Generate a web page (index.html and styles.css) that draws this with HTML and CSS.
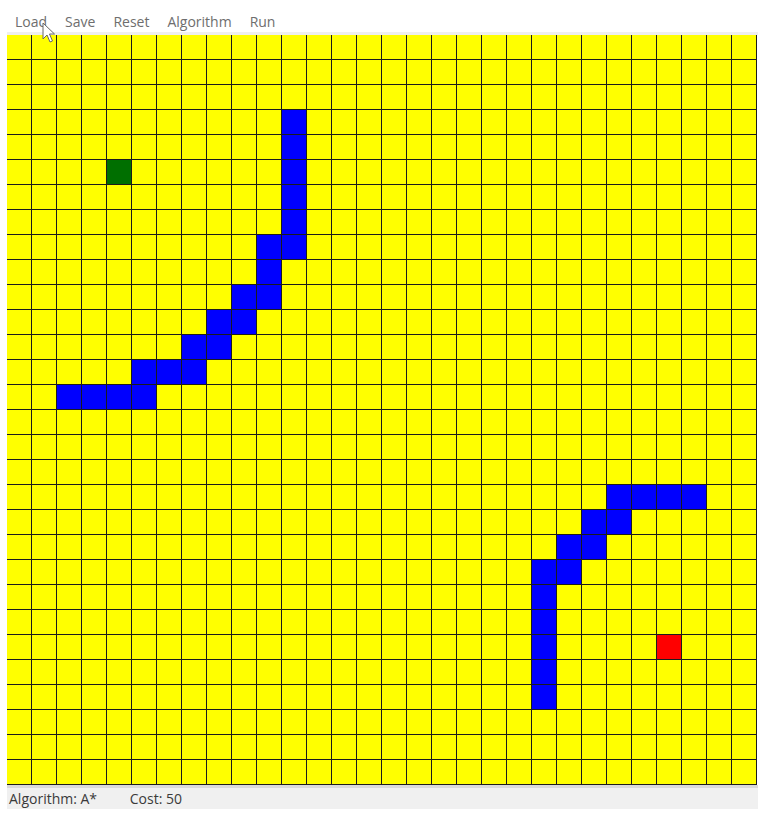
FILE: index.html
```html
<!DOCTYPE html>
<html>
	<head>
		<meta charset="utf-8" />
		<title>Path Finder</title>
		<link rel="stylesheet" href="styles.css">
		<script type="text/javascript">
			window.onload = function(){
				var board = document.getElementById("board");
				var size = 30;

				//障碍物 (行,列)
				var walls = [
					"3,11","4,11","5,11","6,11","7,11","8,11",
					"8,10","9,10","10,10",
					"10,9","11,9",
					"11,8","12,8",
					"12,7","13,7",
					"13,6",
					"13,5","14,5",
					"14,2","14,3","14,4",
					"18,24","18,25","18,26","18,27",
					"19,23","19,24",
					"20,22","20,23",
					"21,21","21,22",
					"22,21","23,21","24,21","25,21","26,21"
				];
				var start = "5,4";
				var goal = "24,26";

				for (var r = 0; r < size; r++) {
					for (var c = 0; c < size; c++) {
						var cell = document.createElement("div");
						var key = r + "," + c;
						if (walls.indexOf(key) != -1) {
							cell.className = "wall";
						} else if (key == start) {
							cell.className = "start";
						} else if (key == goal) {
							cell.className = "goal";
						}
						board.appendChild(cell);
					}
				}
			};
		</script>
	</head>
	<body>
		<div id="window">
			<div id="menu">
				<span>Load</span>
				<span>Save</span>
				<span>Reset</span>
				<span>Algorithm</span>
				<span>Run</span>
			</div>
			<div id="board"></div>
			<div id="status">
				<span>Algorithm: A*</span>
				<span class="cost">Cost: 50</span>
			</div>
		</div>
		<svg class="cursor" width="14" height="22" viewBox="0 0 14 22">
			<path d="M1 1 L1 17 L5 13 L8 20 L10.5 19 L7.5 12 L12.5 12 Z" fill="#fff" stroke="#666" stroke-width="1" stroke-linejoin="round"/>
		</svg>
	</body>
</html>
```

FILE: styles.css
```css
*{margin: 0;padding: 0;}
body{background-color: #fff;
font-family: "Open Sans", "Noto Sans", sans-serif;
font-size: 14px;
position: relative;
}
#window{width: 751px;
margin-left: 7px;
}
#menu{height: 20px;
padding: 12px 0 0 8px;
display: flex;
border-bottom: 3px solid #efefef;
}
#menu span{margin-right: 18px;
color: #6e6e6e;
line-height: 20px;
}
#board{width: 750px;
display: grid;
grid-template-columns: repeat(30, 25px);
grid-auto-rows: 25px;
background-color: #ff0;
}
#board div{box-sizing: border-box;
border-right: 1px solid #1c1c1c;
border-bottom: 1px solid #1c1c1c;
}
#board .wall{background-color: #0000ff;}
#board .start{background-color: #006f00;}
#board .goal{background-color: #ff0000;}
#status{height: 20px;
padding: 1px 0 0 2px;
border-top: 3px solid #dadada;
background-color: #f0f0f0;
color: #3a3a3a;
line-height: 20px;
}
#status .cost{margin-left: 29px;}
/* 鼠标指针 */
.cursor{position: absolute;
left: 42px;
top: 22px;
}
```
